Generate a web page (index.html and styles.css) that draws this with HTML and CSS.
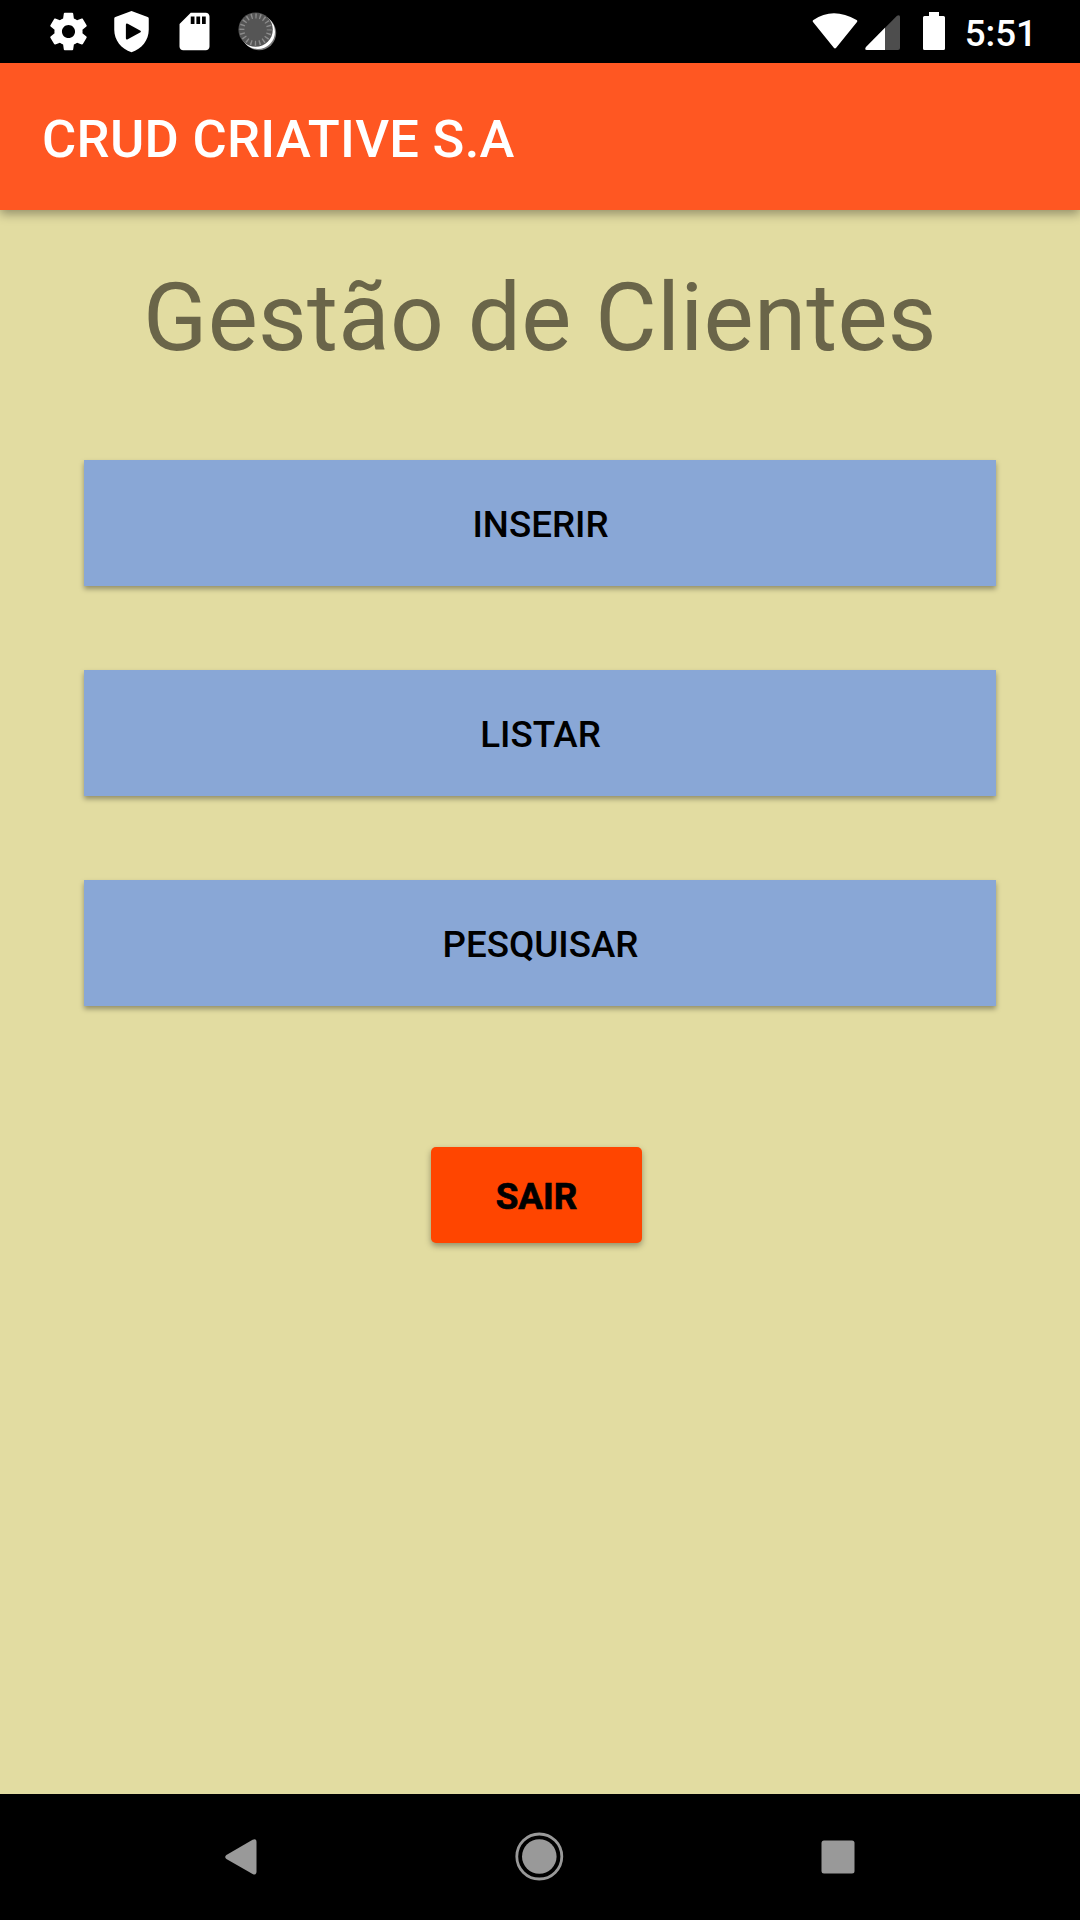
FILE: index.html
```html
<!DOCTYPE html>
<html lang="pt">
<head>
<meta charset="utf-8">
<title>CRUD CRIATIVE S.A</title>
<link rel="stylesheet" href="styles.css">
</head>
<body>
<div class="screen">
  <div class="status-bar">
    <div class="notifications">
      <svg class="notification-icon" viewBox="0 0 24 24"><path fill="#fff" d="M19.43 12.98c.04-.32.07-.64.07-.98s-.03-.66-.07-.98l2.11-1.65c.19-.15.24-.42.12-.64l-2-3.46c-.12-.22-.39-.3-.61-.22l-2.49 1c-.52-.4-1.08-.73-1.69-.98l-.38-2.65C14.46 2.18 14.25 2 14 2h-4c-.25 0-.46.18-.49.42l-.38 2.65c-.61.25-1.17.59-1.69.98l-2.49-1c-.23-.09-.49 0-.61.22l-2 3.46c-.13.22-.07.49.12.64l2.11 1.65c-.04.32-.07.65-.07.98s.03.66.07.98l-2.11 1.65c-.19.15-.24.42-.12.64l2 3.46c.12.22.39.3.61.22l2.49-1c.52.4 1.08.73 1.69.98l.38 2.65c.03.24.24.42.49.42h4c.25 0 .46-.18.49-.42l.38-2.65c.61-.25 1.17-.59 1.69-.98l2.49 1c.23.09.49 0 .61-.22l2-3.46c.12-.22.07-.49-.12-.64l-2.11-1.65zM12 15.5c-1.93 0-3.5-1.57-3.5-3.5s1.57-3.5 3.5-3.5 3.5 1.57 3.5 3.5-1.57 3.5-3.5 3.5z"/></svg>
      <svg class="notification-icon" viewBox="0 0 24 24"><path fill="#fff" fill-rule="evenodd" d="M12 1 20.6 4.2Q21.2 4.4 21.2 5V11C21.2 16.6 17.5 21.2 12 23 6.5 21.2 2.8 16.6 2.8 11V5Q2.8 4.4 3.4 4.2ZM9 8.4V15.6Q9.1 16.6 10 16.1L16.8 12.4Q17.3 12 16.8 11.6L10 7.9Q9.1 7.4 9 8.4Z"/></svg>
      <svg class="notification-icon" viewBox="0 0 24 24"><path fill="#fff" d="M18 2h-8L4.02 8 4 20c0 1.1.9 2 2 2h12c1.1 0 2-.9 2-2V4c0-1.1-.9-2-2-2zm-6 6h-2V4h2v4zm3 0h-2V4h2v4zm3 0h-2V4h2v4z"/></svg>
      <svg class="notification-icon" viewBox="0 0 45 45">
        <circle cx="24" cy="24" r="17.2" fill="#777"/>
        <circle cx="22.8" cy="22.8" r="17.2" fill="#fff"/>
        <circle cx="20.6" cy="20.6" r="17.2" fill="#555"/>
        <circle cx="20.6" cy="20.6" r="13.7" fill="none" stroke="#8c8c8c" stroke-width="5" stroke-dasharray="1.4 2.904" stroke-dashoffset=".7"/>
      </svg>
    </div>
    <div class="system-status">
      <svg class="wifi" viewBox="0 0 46 38"><path fill="#fff" d="M1 10Q.2 8.8 1.4 8 21-5.5 44.6 8 45.8 8.8 45 10L24.2 35.8Q23 37 21.8 35.8Z"/></svg>
      <svg class="signal" viewBox="0 0 35 35"><path fill="#4d4d4d" d="M1 32 32 .8Q35-.8 35 2V33Q35 35 33 35H2Q-.8 35 1 32Z"/><path fill="#fff" d="M1 32 20 12.8V35H2Q-.8 35 1 32Z"/></svg>
      <svg class="battery" viewBox="0 0 22 38"><path fill="#fff" d="M6 0H16V4H20.5Q22 4 22 5.5V36.5Q22 38 20.5 38H1.5Q0 38 0 36.5V5.5Q0 4 1.5 4H6Z"/></svg>
      <span class="clock">5:51</span>
    </div>
  </div>
  <header class="app-bar"><span class="app-title">CRUD CRIATIVE S.A</span></header>
  <main class="content">
    <h1 class="heading">Gestão de Clientes</h1>
    <div class="actions">
      <button class="action">INSERIR</button>
      <button class="action">LISTAR</button>
      <button class="action">PESQUISAR</button>
    </div>
    <button class="exit">SAIR</button>
  </main>
  <nav class="nav-bar">
    <svg class="nav-icon" viewBox="0 0 50 50"><path fill="#999" d="M11.4 23.1 37.6 7.7Q41.5 6 41.5 10V39.6Q41.5 43.6 37.6 41.9L11.4 26.9Q9 25 11.4 23.1Z"/></svg>
    <svg class="nav-icon" viewBox="0 0 50 50"><circle cx="25.3" cy="24.5" r="22.5" fill="none" stroke="#999" stroke-width="2.8"/><circle cx="25.3" cy="24.5" r="17.3" fill="#999"/></svg>
    <svg class="nav-icon" viewBox="0 0 50 50"><rect x="8.5" y="8.5" width="33" height="33" rx="2.5" fill="#999"/></svg>
  </nav>
</div>
</body>
</html>
```
FILE: styles.css
```css
* {
  box-sizing: border-box;
}

body {
  margin: 0;
  font-family: Roboto, sans-serif;
}

.screen {
  display: flex;
  flex-direction: column;
  width: 1080px;
  height: 1920px;
  background: #e2dca1;
}

.status-bar {
  display: flex;
  justify-content: space-between;
  height: 63px;
  padding: 0 43px 0 46px;
  background: #000;
}

.notifications {
  display: flex;
  align-items: center;
  gap: 18px;
}

.notification-icon {
  width: 45px;
  height: 45px;
}

.system-status {
  display: flex;
  align-items: flex-start;
}

.wifi {
  width: 46px;
  height: 38px;
  margin-top: 12px;
}

.signal {
  width: 35px;
  height: 35px;
  margin: 15px 23px 0 7px;
}

.battery {
  width: 22px;
  height: 38px;
  margin: 12px 20px 0 0;
}

.clock {
  color: #fff;
  font-size: 36.75px;
  font-weight: 500;
  line-height: 67px;
}

.app-bar {
  z-index: 1;
  height: 147px;
  padding-left: 42px;
  background: #ff5722;
  box-shadow: 0 4px 10px rgba(0, 0, 0, .35);
}

.app-title {
  color: #fff;
  font-size: 52.5px;
  font-weight: 500;
  letter-spacing: .28px;
  line-height: 152px;
}

.content {
  display: flex;
  flex: 1;
  flex-direction: column;
  align-items: center;
  padding: 52px 84px 0;
}

.heading {
  margin: 0 0 87px;
  color: #6a6549;
  font-size: 94.5px;
  font-weight: 400;
  letter-spacing: .25px;
  line-height: 111px;
}

.actions {
  display: flex;
  flex-direction: column;
  gap: 84px;
  width: 100%;
}

.action,
.exit {
  border: 0;
  color: #000;
  font-family: inherit;
  font-size: 36.75px;
}

.action {
  height: 126px;
  padding: 3px 0 0 1px;
  background: #89a7d6;
  box-shadow: 0 3px 5px rgba(0, 0, 0, .35);
  font-weight: 500;
}

.exit {
  width: 211px;
  height: 96px;
  margin: 141px 7px 0 0;
  padding: 3px 0 0;
  border-radius: 5px;
  background: #ff4500;
  box-shadow: 0 3px 6px rgba(0, 0, 0, .35);
  font-weight: 700;
  -webkit-text-stroke: .7px #000;
}

.nav-bar {
  display: flex;
  align-items: center;
  justify-content: center;
  gap: 249px;
  height: 126px;
  padding-right: 2px;
  background: #000;
}

.nav-icon {
  width: 50px;
  height: 50px;
}
```
